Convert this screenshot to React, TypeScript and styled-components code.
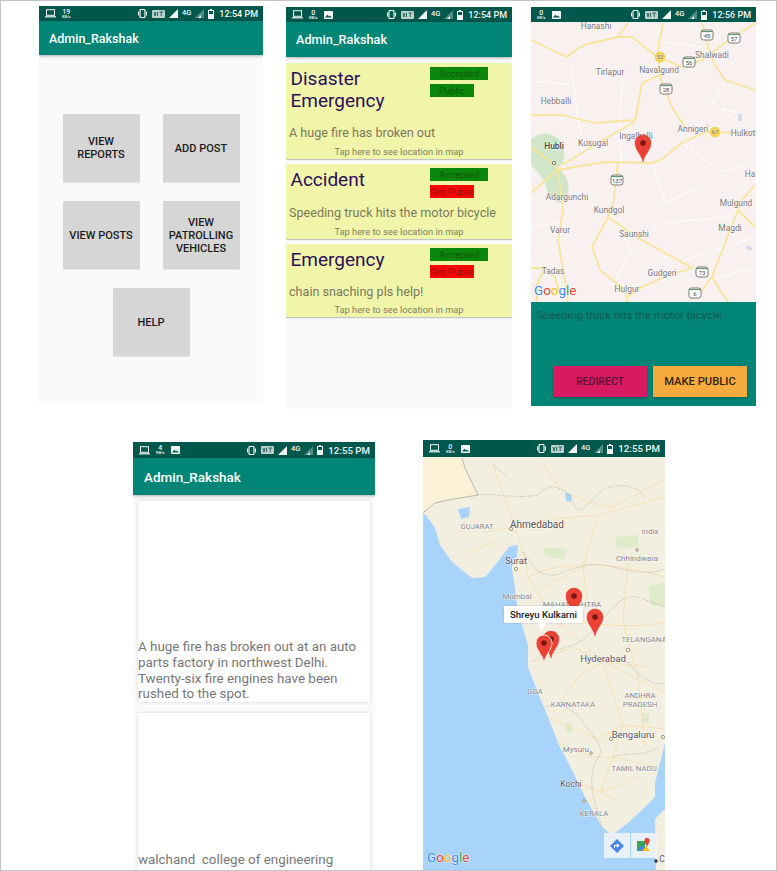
import React from "react";
import styled, { createGlobalStyle } from "styled-components";

const GlobalStyle = createGlobalStyle`
  html, body { margin: 0; padding: 0; background: #fff; }
  body { font-family: Roboto, "Liberation Sans", sans-serif; }
`;

const Frame = styled.div`
  width: 777px;
  height: 871px;
  box-sizing: border-box;
  border: 1px solid #c4c4c4;
  overflow: hidden;
`;

const TopRow = styled.div`
  display: flex;
  align-items: flex-start;
  padding: 5px 0 0 38px;
  height: 433px;
  box-sizing: border-box;
`;

const BottomRow = styled.div`
  display: flex;
  align-items: flex-start;
  gap: 48px;
  padding-left: 132px;
  height: 436px;
  overflow: hidden;
`;

const Phone = styled.div<{ $w: number; $h: number; $top?: number; $left?: number; $bg?: string }>`
  width: ${(p) => p.$w}px;
  height: ${(p) => p.$h}px;
  margin-top: ${(p) => p.$top ?? 0}px;
  margin-left: ${(p) => p.$left ?? 0}px;
  background: ${(p) => p.$bg ?? "#fafafa"};
  display: flex;
  flex-direction: column;
  flex-shrink: 0;
  overflow: hidden;
`;

const StatusBar = styled.div<{ $h?: number }>`
  height: ${(p) => p.$h ?? 15}px;
  flex-shrink: 0;
  background: #00574b;
  color: #f2f5f4;
  display: flex;
  align-items: center;
  padding: 0 5px 0 6px;
  gap: 6px;
`;

const Speed = styled.span`
  display: flex;
  flex-direction: column;
  align-items: center;
  font-size: 7px;
  line-height: 6px;
  font-weight: 500;
  small {
    font-size: 4px;
    line-height: 4px;
  }
`;

const StatusRight = styled.div`
  margin-left: auto;
  display: flex;
  align-items: center;
  gap: 4px;
`;

const NetType = styled.span`
  font-size: 7.5px;
  font-weight: 500;
  margin-top: -3px;
`;

const Clock = styled.span<{ $size: number }>`
  font-size: ${(p) => p.$size}px;
  font-weight: 500;
  white-space: nowrap;
  margin-left: 1px;
`;

const AppBar = styled.div<{ $h: number; $size: number; $pad?: number }>`
  height: ${(p) => p.$h}px;
  flex-shrink: 0;
  background: #008577;
  color: #fff;
  font-size: ${(p) => p.$size}px;
  font-weight: 500;
  display: flex;
  align-items: center;
  padding-left: ${(p) => p.$pad ?? 10}px;
  box-shadow: 0 1px 3px rgba(0, 0, 0, 0.3);
  position: relative;
`;

const MenuGrid = styled.div`
  display: grid;
  grid-template-columns: 77px 77px;
  grid-auto-rows: 68px;
  gap: 19px 23px;
  justify-content: center;
  padding-top: 59px;
`;

const MenuButton = styled.button<{ $wide?: boolean }>`
  border: none;
  border-radius: 1px;
  padding: 0 4px;
  background: #d6d6d6;
  color: #1c1c1c;
  font-family: inherit;
  font-size: 11px;
  font-weight: 500;
  line-height: 13px;
  text-transform: uppercase;
  box-shadow: 0 1px 1px rgba(0, 0, 0, 0.1);
  ${(p) => p.$wide && "grid-column: 1 / span 2; justify-self: center; width: 77px;"}
`;

const ReportList = styled.div`
  display: flex;
  flex-direction: column;
  gap: 5px;
  padding-top: 6px;
`;

const ReportCard = styled.div<{ $h: number }>`
  height: ${(p) => p.$h}px;
  background: #f1f5aa;
  box-shadow: 0 1px 1px rgba(0, 0, 0, 0.22);
  display: flex;
  flex-direction: column;
  box-sizing: border-box;
`;

const CardTop = styled.div<{ $h: number }>`
  display: flex;
  justify-content: space-between;
  height: ${(p) => p.$h}px;
`;

const CardTitle = styled.div`
  width: 130px;
  padding: 5px 0 0 4.5px;
  font-size: 19px;
  line-height: 22px;
  color: #2c0f57;
`;

const TagColumn = styled.div`
  width: 80px;
  padding-top: 4px;
  margin-right: 2px;
  display: flex;
  flex-direction: column;
  align-items: flex-start;
  gap: 4px;
`;

const Tag = styled.span<{ $w: number; $bg: string }>`
  width: ${(p) => p.$w}px;
  height: 13px;
  background: ${(p) => p.$bg};
  color: rgba(20, 30, 20, 0.5);
  font-size: 9.5px;
  line-height: 13px;
  text-align: center;
  white-space: nowrap;
`;

const CardBody = styled.div`
  padding-left: 3px;
  font-size: 12.6px;
  line-height: 15px;
  color: #79795a;
`;

const CardHint = styled.div`
  margin-top: auto;
  padding-bottom: 1px;
  font-size: 9.3px;
  line-height: 12px;
  text-align: center;
  color: #80805f;
`;

const DetailPanel = styled.div`
  flex: 1;
  background: #008577;
  display: flex;
  flex-direction: column;
`;

const DetailText = styled.div`
  padding: 7px 0 0 5px;
  font-size: 11.3px;
  line-height: 14px;
  color: #0b5a52;
`;

const DetailActions = styled.div`
  margin-top: auto;
  padding: 0 9px 9px 0;
  display: flex;
  justify-content: flex-end;
  gap: 6px;
`;

const ActionButton = styled.button<{ $bg: string; $color: string; $size: number }>`
  width: 94px;
  height: 31px;
  border: none;
  padding: 0;
  background: ${(p) => p.$bg};
  color: ${(p) => p.$color};
  font-family: inherit;
  font-size: ${(p) => p.$size}px;
  font-weight: 500;
  box-shadow: 0 1px 2px rgba(0, 0, 0, 0.35);
`;

const PostList = styled.div`
  display: flex;
  flex-direction: column;
  gap: 11px;
  padding: 6px 5px 0;
`;

const PostCard = styled.div`
  height: 201px;
  flex-shrink: 0;
  background: #fff;
  box-shadow: 0 0 3px rgba(0, 0, 0, 0.16);
  display: flex;
  flex-direction: column;
  justify-content: flex-end;
  font-size: 13.4px;
  line-height: 15.7px;
  color: #777;
  white-space: pre-wrap;
`;

const PostCardCut = styled(PostCard)`
  justify-content: flex-start;
  padding-top: 139px;
  box-sizing: border-box;
`;

const MapLabel = styled.text<{ $size?: number; $bold?: boolean; $color?: string }>`
  font-family: Roboto, sans-serif;
  font-size: ${(p) => p.$size ?? 8.4}px;
  font-weight: ${(p) => (p.$bold ? 500 : 400)};
  fill: ${(p) => p.$color ?? "#77777b"};
  paint-order: stroke;
  stroke: rgba(255, 255, 255, 0.7);
  stroke-width: 1px;
`;

const MapBox = styled.div<{ $h: number }>`
  position: relative;
  height: ${(p) => p.$h}px;
  flex-shrink: 0;
  overflow: hidden;
  svg { display: block; }
`;

const InfoBubble = styled.div`
  position: absolute;
  left: 81px;
  top: 149px;
  width: 79px;
  height: 17px;
  background: #fff;
  color: #222;
  font-size: 9.6px;
  font-weight: 500;
  line-height: 17px;
  text-align: center;
  box-shadow: 0 0 2px rgba(0, 0, 0, 0.2);
  &::after {
    content: "";
    position: absolute;
    left: 34px;
    top: 17px;
    border-left: 4px solid transparent;
    border-right: 4px solid transparent;
    border-top: 8px solid #fff;
  }
`;

const MapTools = styled.div`
  position: absolute;
  right: 8px;
  bottom: 13px;
  display: flex;
  gap: 1px;
`;

const MapTool = styled.div`
  width: 26px;
  height: 25px;
  background: rgba(240, 245, 248, 0.88);
  display: flex;
  align-items: center;
  justify-content: center;
`;

const Laptop = () => (
  <svg width="11" height="9" viewBox="0 0 11 9">
    <rect x="1.5" y="0.7" width="8" height="5.6" fill="none" stroke="#f2f5f4" strokeWidth="1" />
    <rect x="0" y="7.2" width="11" height="1.2" fill="#f2f5f4" />
  </svg>
);

const PhotoIcon = () => (
  <svg width="9" height="8" viewBox="0 0 9 8">
    <rect width="9" height="8" rx="0.8" fill="#f2f5f4" />
    <path d="M1 6.5 L3.4 3.8 L5 5.4 L6 4.4 L8 6.5 Z" fill="#00574b" />
  </svg>
);

const VibrateIcon = () => (
  <svg width="11" height="9" viewBox="0 0 11 9">
    <rect x="3" y="0.5" width="5" height="8" rx="1" fill="none" stroke="#f2f5f4" strokeWidth="1.2" />
    <path d="M1.5 2.5 V6.5 M9.5 2.5 V6.5" stroke="#f2f5f4" strokeWidth="1" />
  </svg>
);

const VolteIcon = () => (
  <svg width="13" height="8" viewBox="0 0 13 8">
    <rect width="13" height="8" rx="1" fill="#bcd0cb" />
    <path d="M2 2 L3 6 L4 2 M5.5 2 V6 M7.5 2 H11 M9.2 2 V6" stroke="#00574b" strokeWidth="0.8" fill="none" />
  </svg>
);

const SignalIcon = ({ dim }: { dim?: boolean }) => (
  <svg width="9" height="9" viewBox="0 0 9 9">
    <path d="M0 9 L9 0 V9 Z" fill={dim ? "#4f8d82" : "#f2f5f4"} />
    {dim && <path d="M3 9 L6 6 V9 Z" fill="#f2f5f4" />}
  </svg>
);

const BatteryIcon = () => (
  <svg width="6" height="10" viewBox="0 0 6 10">
    <path d="M2 0 H4 V1 H6 V10 H0 V1 H2 Z" fill="#f2f5f4" />
    <rect x="1" y="2" width="4" height="3" fill="#00574b" />
  </svg>
);

const Status = ({ speed, photo, time, laptop = true, h }: { speed: string; photo?: boolean; time: string; laptop?: boolean; h?: number }) => (
  <StatusBar $h={h}>
    {laptop && <Laptop />}
    <Speed>
      {speed}
      <small>KB/s</small>
    </Speed>
    {photo && <PhotoIcon />}
    <StatusRight>
      <VibrateIcon />
      <VolteIcon />
      <SignalIcon />
      <NetType>4G</NetType>
      <SignalIcon dim />
      <BatteryIcon />
      <Clock $size={h ? 9.7 : 9}>{time}</Clock>
    </StatusRight>
  </StatusBar>
);

const Pin = ({ x, y, ring }: { x: number; y: number; ring?: boolean }) => (
  <g transform={`translate(${x} ${y})`}>
    <path
      d="M0 0 C-1.2 -7 -8 -12 -8 -19 A8 8 0 1 1 8 -19 C8 -12 1.2 -7 0 0 Z"
      fill="#ea4335"
      stroke={ring ? "#f6d8d0" : "#d8352a"}
      strokeWidth={ring ? 1 : 0.5}
    />
    <circle cx="0" cy="-19" r="2.8" fill="#7a1410" />
  </g>
);

const GoogleMark = ({ x, y }: { x: number; y: number }) => (
  <MapLabel x={x} y={y} $size={13.4}>
    <tspan fill="#4285f4">G</tspan>
    <tspan fill="#ea4335">o</tspan>
    <tspan fill="#fbbc05">o</tspan>
    <tspan fill="#4285f4">g</tspan>
    <tspan fill="#34a853">l</tspan>
    <tspan fill="#ea4335">e</tspan>
  </MapLabel>
);

const Shield = ({ x, y, n }: { x: number; y: number; n: string }) => (
  <g>
    <rect x={x - 6} y={y - 5} width="12" height="10" rx="2.5" fill="#fff" stroke="#555" strokeWidth="0.8" />
    <path d={`M${x - 5.5} ${y - 3.4} H${x + 5.5}`} stroke="#4f8f5a" strokeWidth="1" />
    <MapLabel x={x} y={y + 3} $size={6} textAnchor="middle" $color="#444">{n}</MapLabel>
  </g>
);

const YellowBadge = ({ x, y, n }: { x: number; y: number; n: string }) => (
  <g>
    <circle cx={x} cy={y} r="5.2" fill="#f6cf3f" />
    <MapLabel x={x} y={y + 2} $size={6} textAnchor="middle" $color="#6b5a10">{n}</MapLabel>
  </g>
);

const cityLabels: [string, number, number][] = [
  ["Hanashi", 65, 7], ["Shalwadi", 181, 36], ["Tirlapur", 79, 53], ["Navalgund", 128, 51],
  ["Hebballi", 25, 82], ["Annigeri", 162, 110], ["Hulkoti", 213, 114], ["Ingalhalli", 105, 117],
  ["Kusugal", 62, 124], ["Adargunchi", 36, 178], ["Mulgund", 205, 184], ["Kundgol", 78, 191],
  ["Varur", 29, 211], ["Saunshi", 103, 215], ["Magdi", 199, 209], ["Tadas", 22, 252],
  ["Gudgeri", 131, 254], ["Hulgur", 96, 270], ["Ha", 219, 155],
];

const CityMap = () => (
  <svg width="225" height="280" viewBox="0 0 225 280">
    <rect width="225" height="280" fill="#f8f1ef" />
    <path d="M0 118 C8 108 22 110 30 120 C36 130 34 142 26 146 C36 152 42 165 34 178 C28 186 16 176 14 160 C8 150 0 146 0 140 Z" fill="#cfe6c8" />
    <path d="M207 92 l4 0 l0 7 l-4 0 Z M214 224 l6 1 l2 3 l-5 0 Z" fill="#cfdcf0" />
    <g fill="none" stroke="#fff" strokeWidth="1">
      <path d="M40 40 C44 70 44 100 56 128 M92 60 C88 90 88 110 90 140 M108 118 L118 140 M121 141 L135 180 L170 165 M151 121 L190 150 L225 140" />
      <path d="M160 60 L205 100 M194 58 L180 85 L205 90 M85 200 L100 230 L85 255 M107 216 L140 200 L200 195 M150 240 L225 215" />
      <path d="M5 60 L40 62 M0 205 L30 200 M40 250 L60 265 M180 258 L225 245 M135 20 L170 25" />
    </g>
    <g fill="none" stroke="#f8e49a" strokeWidth="1.8" strokeLinejoin="round">
      <path d="M0 18 L36 35 C45 28 50 23 61 21 L87 15 L97 1 M87 15 L101 15 L127 35 L151 45 L171 38 L194 21 L224 1" />
      <path d="M132 1 L127 28 L129 55 L141 85 L154 105" />
      <path d="M129 53 L111 61 L104 98 L64 101 L31 93 L0 93" />
      <path d="M104 100 L77 115 L31 143" />
      <path d="M26 148 L74 140 L121 141 C135 138 140 128 151 121 L174 110 L224 111" />
      <path d="M171 1 L181 38 L194 58 L224 68" />
      <path d="M0 125 L26 145 L31 178 L32 188 L27 218 L36 271 L37 280" />
      <path d="M26 148 L0 171 M0 246 L14 246 L24 255 L28 270 M14 246 L6 262 L6 280" />
      <path d="M87 141 L82 185 L77 195 L61 225 L69 248 L94 268 L97 280" />
      <path d="M77 195 L107 216 L162 246 L137 253 L109 266 L97 275" />
      <path d="M224 163 L211 178 L207 188 L194 221 L181 255 L171 268 L159 278 M181 255 L197 280 M207 188 L224 205" />
    </g>
    <circle cx="23" cy="141" r="1.6" fill="#fff" stroke="#555" strokeWidth="0.8" />
    <Shield x={176} y={13} n="45" />
    <Shield x={203} y={16} n="57" />
    <Shield x={158} y={40} n="56" />
    <Shield x={135} y={67} n="28" />
    <Shield x={86} y={158} n="137" />
    <Shield x={171} y={250} n="73" />
    <Shield x={164} y={271} n="6" />
    <YellowBadge x={129} y={35} n="52" />
    <YellowBadge x={184} y={110} n="67" />
    {cityLabels.map(([t, x, y]) => (
      <MapLabel key={t} x={x} y={y} textAnchor="middle">{t}</MapLabel>
    ))}
    <MapLabel x={23} y={127} $bold $color="#3f3f42" textAnchor="middle">Hubli</MapLabel>
    <GoogleMark x={3} y={273} />
    <Pin x={112} y={140} />
  </svg>
);

const regionLabels: [string, number, number, number][] = [
  ["GUJARAT", 54, 72, 7.6], ["Ahmedabad", 114, 71, 10], ["India", 227, 77, 7.5], ["Chhindwara", 214, 104, 8],
  ["Surat", 93, 107, 9.5], ["Mumbai", 94, 142, 8], ["MAHARASHTRA", 149, 150, 8], ["TELANGANA", 221, 185, 7.8],
  ["Hyderabad", 180, 205, 9.5], ["GOA", 112, 237, 7.8], ["KARNATAKA", 150, 250, 7.8], ["ANDHRA", 217, 241, 7.8],
  ["PRADESH", 217, 250, 7.8], ["Bengaluru", 210, 281, 9.5], ["Mysuru", 153, 295, 8], ["TAMIL NADU", 211, 314, 7.8],
  ["Kochi", 148, 330, 8.5], ["KERALA", 171, 359, 7.8], ["C", 239, 405, 8.5],
];

const IndiaMap = () => (
  <svg width="242" height="414" viewBox="0 0 242 414">
    <rect width="242" height="414" fill="#f3efe0" />
    <path d="M39 0 L42 11 L55 38 L25 43 L12 46 L0 56 V0 Z" fill="#fbf1d6" />
    <path d="M0 58 L3 58 L12 71 L17 88 L29 105 L49 121 L62 120 L74 106 L82 95 L87 90 L92 91 L89 111 L92 131 L95 155 L105 188 L105 210 L115 236 L125 260 L135 286 L149 313 L162 340 L179 370 L189 378 L205 366 L222 350 L232 340 L232 326 L237 306 L242 286 V352 L232 362 L233 414 H0 Z" fill="#a8d4fb" />
    <path d="M35 52 L47 50 L46 60 L38 62 Z M142 35 L149 37 L148 45 L143 44 Z M85 90 L95 88 L94 100 L89 103 Z" fill="#a8d4fb" />
    <path d="M192 80 L215 78 L216 90 L194 92 Z M143 266 L149 266 L149 276 L143 276 Z M219 256 L226 256 L226 266 L219 266 Z M120 90 L145 92 L140 102 L122 100 Z M225 130 L242 125 V150 L228 148 Z" fill="#dfeac9" />
    <g fill="none" stroke="#f6dfae" strokeWidth="0.9">
      <path d="M92 70 L100 95 L105 120 L130 160 L180 205 L200 268 L190 300 L178 335 M92 70 L130 62 L175 58 L242 40" />
      <path d="M105 120 C130 108 170 100 242 120 M130 160 C170 168 210 172 242 165 M180 205 L242 236 M200 268 L242 272 M190 300 L232 310" />
      <path d="M120 5 C130 30 150 45 190 50 L242 22 M70 8 L92 70 M60 75 L92 70 M45 95 L72 85 M125 260 L175 282 L200 268" />
      <path d="M110 205 L150 190 L180 205 L225 210 M130 255 L155 220 L180 205 M135 286 L170 300 L190 300 M150 325 L178 335 L215 320" />
      <path d="M165 345 L178 335 L195 345 M160 110 L165 150 M205 105 L200 165 L215 220 L222 290 M175 58 L160 110 L120 130" />
    </g>
    <g fill="none" stroke="#9c9c96" strokeWidth="0.7">
      <path d="M39 1 L42 11 L55 38 L25 43 L12 46 L0 56" />
    </g>
    <g fill="none" stroke="#a8a89c" strokeWidth="0.7" strokeDasharray="1.4 1.4">
      <path d="M55 38 C75 36 90 42 115 38 C125 25 140 28 150 45 C155 65 170 40 180 32 C200 25 215 30 222 40 M70 8 L85 20" />
      <path d="M100 95 C110 110 120 125 140 115 C160 108 175 105 190 110 C210 115 225 118 242 112" />
      <path d="M110 205 C120 190 150 195 165 178 C175 170 195 135 215 140 L242 150 M205 205 C220 225 235 230 242 225" />
      <path d="M122 250 C135 245 150 252 158 262 C165 275 175 280 178 295 C170 310 165 320 172 345 C176 360 178 370 180 372 M190 300 C205 295 220 300 235 290" />
    </g>
    <g fill="#fff" stroke="#8a7a50" strokeWidth="0.8">
      <circle cx="88" cy="72" r="1.6" />
      <circle cx="93" cy="112" r="1.6" />
      <circle cx="214" cy="93" r="1.3" />
      <circle cx="205" cy="193" r="1.8" />
      <circle cx="188" cy="282" r="1.6" />
      <circle cx="168" cy="296" r="1.3" />
      <circle cx="161" cy="344" r="1.3" />
      <circle cx="240" cy="280" r="1.6" />
    </g>
    <circle cx="233" cy="404" r="1.7" fill="#333" />
    {regionLabels.map(([t, x, y, s]) => (
      <MapLabel key={t} x={x} y={y} $size={s} textAnchor="middle" $color={s > 8.4 ? "#55555a" : "#85858a"}>{t}</MapLabel>
    ))}
    <GoogleMark x={4} y={405} />
    <Pin x={151} y={158} />
    <Pin x={172} y={179} />
    <Pin x={128} y={201} />
    <Pin x={121} y={205} ring />
  </svg>
);

const reports = [
  { title: "Disaster Emergency", body: "A huge fire has broken out", h: 96, top: 62, pub: true },
  { title: "Accident", body: "Speeding truck hits the motor bicycle", h: 75, top: 41, pub: false },
  { title: "Emergency", body: "chain snaching pls help!", h: 73, top: 40, pub: false },
];

export default function App() {
  return (
    <Frame>
      <GlobalStyle />
      <TopRow>
        <Phone $w={224} $h={397}>
          <Status speed="19" time="12:54 PM" />
          <AppBar $h={34} $size={12.5}>Admin_Rakshak</AppBar>
          <MenuGrid>
            <MenuButton>View Reports</MenuButton>
            <MenuButton>Add Post</MenuButton>
            <MenuButton>View Posts</MenuButton>
            <MenuButton>View Patrolling Vehicles</MenuButton>
            <MenuButton $wide>Help</MenuButton>
          </MenuGrid>
        </Phone>
        <Phone $w={226} $h={402} $top={1} $left={23}>
          <Status speed="0" photo time="12:54 PM" />
          <AppBar $h={35} $size={12.7}>Admin_Rakshak</AppBar>
          <ReportList>
            {reports.map((r) => (
              <ReportCard key={r.title} $h={r.h}>
                <CardTop $h={r.top}>
                  <CardTitle>{r.title}</CardTitle>
                  <TagColumn>
                    <Tag $w={58} $bg="#0b870b">Accepted</Tag>
                    <Tag $w={44} $bg={r.pub ? "#0b870b" : "#fa0505"}>{r.pub ? "Public" : "Not Public"}</Tag>
                  </TagColumn>
                </CardTop>
                <CardBody>{r.body}</CardBody>
                <CardHint>Tap here to see location in map</CardHint>
              </ReportCard>
            ))}
          </ReportList>
        </Phone>
        <Phone $w={225} $h={399} $top={1} $left={19}>
          <Status speed="0" photo laptop={false} time="12:56 PM" />
          <MapBox $h={280}>
            <CityMap />
          </MapBox>
          <DetailPanel>
            <DetailText>Speeding truck hits the motor bicycle</DetailText>
            <DetailActions>
              <ActionButton $bg="#d81b60" $color="#5c1030" $size={10.5}>REDIRECT</ActionButton>
              <ActionButton $bg="#f6ab3f" $color="#33210a" $size={11.2}>MAKE PUBLIC</ActionButton>
            </DetailActions>
          </DetailPanel>
        </Phone>
      </TopRow>
      <BottomRow>
        <Phone $w={242} $h={429} $top={8}>
          <Status speed="4" photo time="12:55 PM" h={16} />
          <AppBar $h={37} $size={13.5} $pad={11}>Admin_Rakshak</AppBar>
          <PostList>
            <PostCard>A huge fire has broken out at an auto parts factory in northwest Delhi. Twenty-six fire engines have been rushed to the spot.</PostCard>
            <PostCardCut>walchand  college of engineering</PostCardCut>
          </PostList>
        </Phone>
        <Phone $w={242} $h={431} $top={6} $bg="#f3efe0">
          <Status speed="0" photo time="12:55 PM" h={17} />
          <MapBox $h={414}>
            <IndiaMap />
            <InfoBubble>Shreyu Kulkarni</InfoBubble>
            <MapTools>
              <MapTool>
                <svg width="14" height="14" viewBox="0 0 14 14">
                  <path d="M7 0 L14 7 L7 14 L0 7 Z" fill="#4a86e8" />
                  <path d="M4.5 9 V6.5 H8 M6.8 4.8 L8.8 6.5 L6.8 8.2" fill="none" stroke="#fff" strokeWidth="1.1" />
                </svg>
              </MapTool>
              <MapTool>
                <svg width="16" height="16" viewBox="0 0 16 16">
                  <path d="M1 3 H9 V13 H1 Z" fill="#34a853" />
                  <path d="M1 13 L6 7 L11 13 Z" fill="#4a86e8" />
                  <path d="M6 13 L10 8 L14 13 Z" fill="#fbbc05" />
                  <path d="M11 9 C10 6 8.5 5 8.5 3 A2.6 2.6 0 1 1 13.6 3 C13.6 5 12 6 11 9 Z" fill="#ea4335" />
                </svg>
              </MapTool>
            </MapTools>
          </MapBox>
        </Phone>
      </BottomRow>
    </Frame>
  );
}
